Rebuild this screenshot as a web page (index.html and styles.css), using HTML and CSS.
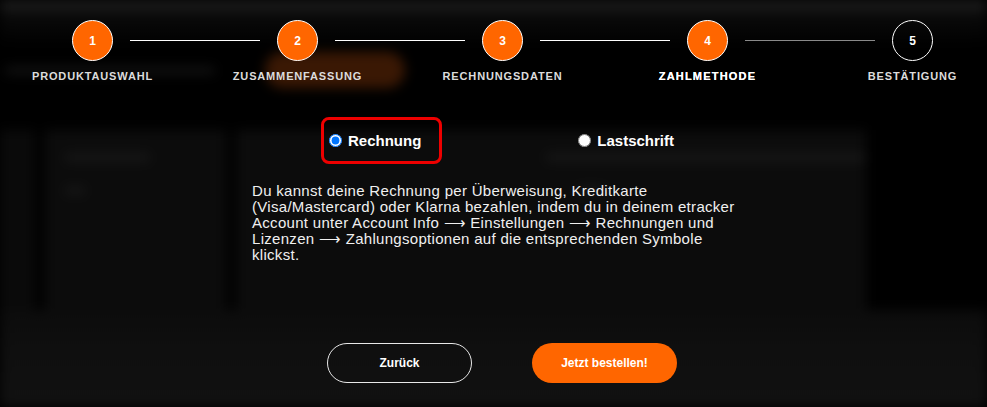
FILE: index.html
```html
<!DOCTYPE html>
<html lang="de">
<head>
    <meta charset="UTF-8">
    <title>Bestellung – Zahlmethode</title>
    <meta name="viewport" content="width=device-width, initial-scale=1.0">
    <link rel="stylesheet" href="styles.css">
</head>
<body>
    <!-- verschwommene Seite im Hintergrund -->
    <div class="backdrop" aria-hidden="true">
        <div class="bd-nav"></div>
        <div class="bd-head">
            <span class="bd-text w1"></span>
            <span class="bd-pill"></span>
        </div>
        <div class="bd-table">
            <div class="bd-cell narrow"></div>
            <div class="bd-cell wide">
                <span class="bd-text w2"></span>
                <span class="bd-text w3"></span>
            </div>
            <div class="bd-cell main">
                <span class="bd-text w4"></span>
                <span class="bd-text w5"></span>
            </div>
            <div class="bd-cell empty"></div>
        </div>
        <div class="bd-footer"></div>
    </div>

    <div class="modal">
        <div class="stepper">
            <div class="step done">
                <div class="step-circle">1</div>
                <div class="step-label">Produktauswahl</div>
            </div>
            <div class="step-line"></div>
            <div class="step done">
                <div class="step-circle">2</div>
                <div class="step-label">Zusammenfassung</div>
            </div>
            <div class="step-line"></div>
            <div class="step done">
                <div class="step-circle">3</div>
                <div class="step-label">Rechnungsdaten</div>
            </div>
            <div class="step-line"></div>
            <div class="step done active">
                <div class="step-circle">4</div>
                <div class="step-label">Zahlmethode</div>
            </div>
            <div class="step-line todo"></div>
            <div class="step">
                <div class="step-circle">5</div>
                <div class="step-label">Bestätigung</div>
            </div>
        </div>

        <div class="payment">
            <div class="options">
                <label class="option highlight">
                    <input type="radio" name="pay" value="rechnung" checked>
                    <span>Rechnung</span>
                </label>
                <label class="option">
                    <input type="radio" name="pay" value="lastschrift">
                    <span>Lastschrift</span>
                </label>
            </div>
            <p class="info">
                Du kannst deine Rechnung per Überweisung, Kreditkarte (Visa/Mastercard) oder Klarna bezahlen, indem du in deinem etracker Account unter Account Info ⟶ Einstellungen ⟶ Rechnungen und Lizenzen ⟶ Zahlungsoptionen auf die entsprechenden Symbole klickst.
            </p>
        </div>

        <div class="actions">
            <button class="btn btn-outline">Zurück</button>
            <button class="btn btn-primary">Jetzt bestellen!</button>
        </div>
    </div>
</body>
</html>
```

FILE: styles.css
```css
* {
    box-sizing: border-box;
}

body {
    margin: 0;
    background: #000;
    height: 407px;
    overflow: hidden;
    font-family: 'Liberation Sans', Arial, sans-serif;
    color: #f2f2f2;
    position: relative;
}

/* Hintergrund */
.backdrop {
    position: absolute;
    inset: 0;
    filter: blur(6px);
    display: flex;
    flex-direction: column;
}

.bd-nav {
    height: 10px;
    background: #1c1c1c;
}

.bd-head {
    height: 120px;
    display: flex;
    align-items: center;
    background: linear-gradient(#0c0c0c, #000 30%);
}

.bd-text {
    display: block;
    height: 7px;
    border-radius: 4px;
    background: #191919;
}

.bd-text.w1 { width: 210px; margin-left: 5px; background: #141414; }
.bd-text.w2 { width: 85px; margin: 24px 0 0 20px; }
.bd-text.w3 { width: 20px; margin: 26px 0 0 20px; }
.bd-text.w4 { width: 320px; margin: 24px 0 0 310px; }
.bd-text.w5 { width: 30px; margin: 26px 0 0 340px; }

.bd-pill {
    width: 140px;
    height: 36px;
    margin-left: 50px;
    border-radius: 18px;
    background: #3a1804;
}

.bd-table {
    height: 180px;
    display: flex;
    gap: 10px;
}

.bd-cell {
    background: #0c0c0c;
}

.bd-cell.narrow { width: 38px; background: #0a0a0a; }
.bd-cell.wide { width: 195px; }
.bd-cell.main { flex: 1; }
.bd-cell.empty { width: 120px; background: #000; }

.bd-footer {
    flex: 1;
    background: linear-gradient(#0c0c0c, #0f0f0f 40%, #111);
}

/* Modal */
.modal {
    position: relative;
}

.stepper {
    display: flex;
    align-items: flex-start;
    padding: 20px 0 0 72px;
}

.step {
    width: 41px;
    display: flex;
    flex-direction: column;
    align-items: center;
}

.step-circle {
    width: 41px;
    height: 41px;
    border-radius: 50%;
    border: 1px solid #fff;
    display: flex;
    align-items: center;
    justify-content: center;
    font-size: 12px;
    font-weight: bold;
    color: #fff;
}

.step.done .step-circle {
    background: #ff6600;
}

.step-label {
    margin-top: 9px;
    white-space: nowrap;
    text-transform: uppercase;
    font-size: 11px;
    line-height: 13px;
    font-weight: bold;
    letter-spacing: 0.85px;
    color: #dcdcdc;
}

.step.active .step-label {
    color: #fff;
    letter-spacing: 1.2px;
    text-shadow: 0 0 0.4px #fff;
}

.step-line {
    width: 130px;
    height: 1px;
    margin: 20px 17px 0;
    background: #fff;
}

.step-line.todo {
    background: #8a8a8a;
}

.payment {
    width: 500px;
    margin: 34px 0 0 252px;
}

.options {
    display: flex;
    gap: 128px;
    padding-left: 69px;
}

.option {
    display: flex;
    align-items: center;
    gap: 6px;
    height: 47px;
    padding: 0 18px 0 5px;
    border: 3px solid transparent;
    border-radius: 8px;
    font-size: 15px;
    font-weight: bold;
    color: #fff;
    cursor: pointer;
}

.option.highlight {
    border-color: #ee0000;
}

.option input {
    width: 13px;
    height: 13px;
    margin: 0;
}

.info {
    margin: 19px 0 0;
    font-size: 15px;
    line-height: 16px;
    letter-spacing: 0.3px;
    color: #f0f0f0;
}

.actions {
    display: flex;
    justify-content: center;
    gap: 60px;
    margin: 80px 0 0 17px;
}

.btn {
    width: 145px;
    height: 40px;
    border-radius: 20px;
    font-family: inherit;
    font-size: 12px;
    font-weight: bold;
    color: #fff;
    cursor: pointer;
}

.btn-outline {
    background: transparent;
    border: 1px solid #e8e8e8;
}

.btn-primary {
    background: #ff6600;
    border: none;
}
```
